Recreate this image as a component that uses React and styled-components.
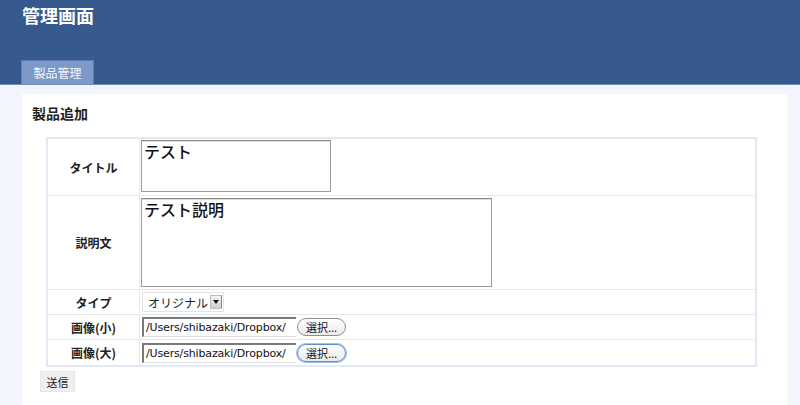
import React from "react";
import styled, { createGlobalStyle } from "styled-components";

const Global = createGlobalStyle`
  html, body { margin: 0; padding: 0; }
  body {
    background: #f3f7fd;
    font-family: "Noto Sans CJK JP", "Noto Sans", sans-serif;
    color: #222;
    height: 405px;
    overflow: hidden;
  }
`;

const Header = styled.header`
  background: #375a8e;
  height: 85px;
  border-bottom: 1px solid #6f8dbb;
  box-sizing: border-box;
  display: flex;
  flex-direction: column;
  justify-content: space-between;
  padding: 0 0 0 21px;
`;

const Title = styled.h1`
  margin: 3px 0 0 1px;
  font-size: 18px;
  font-weight: 700;
  color: #fff;
  line-height: 24px;
`;

const Tabs = styled.nav`
  display: flex;
`;

const Tab = styled.div`
  width: 73px;
  height: 24px;
  box-sizing: border-box;
  background: #7d99c8;
  border: 1px solid #5f7db0;
  border-bottom: none;
  color: #f4f7fc;
  font-size: 12px;
  display: flex;
  align-items: center;
  justify-content: center;
`;

const Panel = styled.main`
  background: #fff;
  margin: 9px 13px 0 22px;
  padding: 9px 10px 20px 10px;
  height: 300px;
`;

const Heading = styled.h2`
  margin: 0 0 14px 0;
  font-size: 14px;
  font-weight: 700;
  line-height: 20px;
  color: #222;
`;

const FormGrid = styled.div`
  margin-left: 14px;
  width: 711px;
  display: grid;
  grid-template-columns: 92px 1fr;
  border: 2px solid #e1eaf4;
  box-sizing: border-box;
`;

const Label = styled.div`
  height: ${(p) => p.h}px;
  box-sizing: border-box;
  border-right: 1px solid #e1eaf4;
  border-bottom: ${(p) => (p.last ? "none" : "1px solid #e1eaf4")};
  display: flex;
  align-items: center;
  justify-content: center;
  font-size: 12px;
  font-weight: 700;
  color: #222;
`;

const Cell = styled.div`
  height: ${(p) => p.h}px;
  box-sizing: border-box;
  border-bottom: ${(p) => (p.last ? "none" : "1px solid #e1eaf4")};
  padding: ${(p) => p.pad || "2px 2px"};
  display: flex;
  align-items: ${(p) => (p.center ? "center" : "flex-start")};
`;

const TextArea = styled.div`
  width: ${(p) => p.w}px;
  height: ${(p) => p.h}px;
  box-sizing: border-box;
  border: 1px solid #9a9a9a;
  border-top-color: #8a8a8a;
  box-shadow: inset 0 1px 0 #dcdcdc;
  padding: 0 2px;
  font-size: 16px;
  font-weight: 500;
  line-height: 21px;
  color: #111;
  background: #fff;
`;

const Select = styled.div`
  display: flex;
  align-items: center;
  height: 20px;
  box-sizing: border-box;
  border: 1px solid #e4e4e4;
  padding: 0 0 0 5px;
  font-size: 12px;
  color: #222;
  background: #fff;
  gap: 2px;
`;

const Arrow = styled.span`
  width: 12px;
  height: 14px;
  background: linear-gradient(#f2f2f2, #cfcfcf);
  border: 1px solid #bbb;
  border-right-color: #888;
  box-sizing: border-box;
  display: flex;
  align-items: center;
  justify-content: center;
  margin-right: 1px;
`;

const FileRow = styled.div`
  display: flex;
  align-items: center;
  gap: 1px;
`;

const PathBox = styled.div`
  width: 154px;
  height: 20px;
  box-sizing: border-box;
  border-top: 2px solid #7a7a7a;
  border-left: 2px solid #7a7a7a;
  border-bottom: 1px solid #ddd;
  padding: 0 0 0 2px;
  font-family: "DejaVu Sans", sans-serif;
  font-size: 11px;
  letter-spacing: -0.15px;
  line-height: 18px;
  color: #111;
  white-space: nowrap;
  overflow: hidden;
`;

const PickButton = styled.div`
  height: 18px;
  box-sizing: border-box;
  padding: 0 8px;
  border-radius: 9px;
  border: 1px solid ${(p) => (p.focus ? "#5a8fc8" : "#8f8f8f")};
  box-shadow: ${(p) => (p.focus ? "0 0 0 1px #9cc2ea" : "none")};
  background: linear-gradient(#ffffff, #eaeaea);
  font-size: 11px;
  line-height: 16px;
  color: #111;
  white-space: nowrap;
`;

const Submit = styled.button`
  display: block;
  margin: 4px 0 0 8px;
  height: 21px;
  width: 35px;
  padding: 0;
  border: 1px solid #e6e6e6;
  background: #efefef;
  font-family: "Noto Sans CJK JP", sans-serif;
  font-size: 11px;
  color: #222;
`;

const FileInput = ({ focus }) => (
  <FileRow>
    <PathBox>/Users/shibazaki/Dropbox/</PathBox>
    <PickButton focus={focus}>選択...</PickButton>
  </FileRow>
);

export default function App() {
  return (
    <>
      <Global />
      <Header>
        <Title>管理画面</Title>
        <Tabs>
          <Tab>製品管理</Tab>
        </Tabs>
      </Header>
      <Panel>
        <Heading>製品追加</Heading>
        <FormGrid>
          <Label h={57}>タイトル</Label>
          <Cell h={57} pad="1px 1px">
            <TextArea w={190} h={52}>テスト</TextArea>
          </Cell>

          <Label h={94}>説明文</Label>
          <Cell h={94} pad="2px 1px">
            <TextArea w={351} h={89}>テスト説明</TextArea>
          </Cell>

          <Label h={25}>タイプ</Label>
          <Cell h={25} pad="0 2px" center>
            <Select>
              オリジナル
              <Arrow>
                <svg width="6" height="4" viewBox="0 0 6 4">
                  <path d="M0 0h6L3 4z" fill="#111" />
                </svg>
              </Arrow>
            </Select>
          </Cell>

          <Label h={25}>画像(小)</Label>
          <Cell h={25} pad="0 2px" center>
            <FileInput />
          </Cell>

          <Label h={25} last>
            画像(大)
          </Label>
          <Cell h={25} pad="0 2px" center last>
            <FileInput focus />
          </Cell>
        </FormGrid>
        <Submit>送信</Submit>
      </Panel>
    </>
  );
}
